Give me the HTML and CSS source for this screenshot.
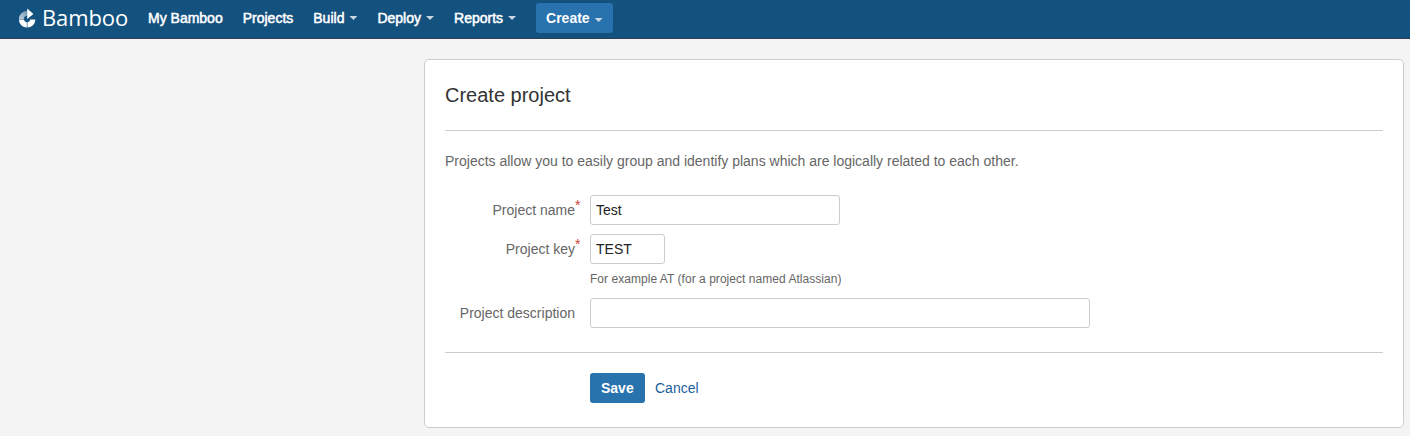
FILE: index.html
```html
<!DOCTYPE html>
<html lang="en">
<head>
<meta charset="utf-8">
<title>Create project - Bamboo</title>
<link rel="stylesheet" href="styles.css">
</head>
<body>
<header class="header">
  <a class="logo">
    <svg class="logo-mark" width="18" height="20" viewBox="0 0 18 20">
      <defs>
        <linearGradient id="fade" x1="0" y1="1" x2="1" y2="0">
          <stop offset="0" stop-color="#fff" stop-opacity=".75"/>
          <stop offset="1" stop-color="#fff" stop-opacity=".4"/>
        </linearGradient>
      </defs>
      <path fill="url(#fade)" d="M.9 11A8.200 8.200 0 0 1 9 3V7.800A3.300 3.300 0 0 0 5.900 11z"/>
      <path fill="#fff" d="M9.200 .6 15.400 5.900 9.200 11z"/>
      <path fill="#fff" d="M.9 11.600H5.900A3.300 3.300 0 0 0 8.800 14.300V19.600A8.300 8.300 0 0 1 .9 11.600zM12.300 11.600H17.400A8.300 8.300 0 0 1 9.400 19.600V14.300A3.300 3.300 0 0 0 12.300 11.600z"/>
    </svg>
    <span class="logo-text">Bamboo</span>
  </a>
  <nav class="nav">
    <a>My Bamboo</a>
    <a>Projects</a>
    <a>Build<i class="caret"></i></a>
    <a>Deploy<i class="caret"></i></a>
    <a>Reports<i class="caret"></i></a>
  </nav>
  <button class="button create">Create<i class="caret"></i></button>
</header>
<main class="panel">
  <h2 class="title">Create project</h2>
  <p class="intro">Projects allow you to easily group and identify plans which are logically related to each other.</p>
  <form class="form">
    <div class="field">
      <label class="label" for="name">Project name<span class="required">*</span></label>
      <input class="input medium" id="name" type="text" value="Test">
    </div>
    <div class="field">
      <label class="label" for="key">Project key<span class="required">*</span></label>
      <input class="input short" id="key" type="text" value="TEST">
    </div>
    <p class="hint">For example AT (for a project named Atlassian)</p>
    <div class="field">
      <label class="label" for="description">Project description</label>
      <input class="input long" id="description" type="text">
    </div>
    <div class="actions">
      <button class="button save" type="button">Save</button>
      <a class="cancel">Cancel</a>
    </div>
  </form>
</main>
</body>
</html>
```

FILE: styles.css
```css
* { box-sizing: border-box; }
body {
  margin: 0;
  background: #f4f4f4;
  color: #666;
  font: 14px/20px "Liberation Sans", Arial, sans-serif;
}
.header {
  display: flex;
  height: 39px;
  padding-left: 18px;
  background: #13517e;
  border-bottom: 1px solid #2e3d54;
  color: #fff;
}
.logo { display: flex; width: 130px; }
.logo-mark { margin-top: 8px; }
.logo-text {
  margin: 2px 0 0 6px;
  font: 400 22px/30px "Open Sans", "Noto Sans", sans-serif;
  letter-spacing: -0.1px;
}
.nav {
  display: flex;
  gap: 20px;
  margin-top: 8px;
  -webkit-text-stroke: 0.5px #fff;
}
.nav a { display: flex; white-space: nowrap; }
.caret {
  width: 8px;
  height: 4px;
  margin: 8px 0 0 5px;
  background: #c9d8e3;
  clip-path: polygon(0 0, 100% 0, 50% 100%);
}
.button {
  display: flex;
  height: 30px;
  padding: 5px 0 0 10px;
  border: 0;
  border-radius: 3px;
  background: #2872ae;
  color: #fff;
  font: bold 14px/20px "Liberation Sans", Arial, sans-serif;
}
.create { width: 77px; margin: 3px 0 0 20px; }
.create .caret { margin-top: 10px; }
.panel {
  width: 980px;
  height: 369px;
  margin: 20px 0 0 424px;
  padding: 20px;
  background: #fff;
  border: 1px solid #ccc;
  border-radius: 5px;
}
.title {
  height: 51px;
  margin: 0;
  border-bottom: 1px solid #ccc;
  color: #333;
  font-size: 20px;
  font-weight: normal;
  line-height: 30px;
}
.intro { margin: 20px 0 24px; }
.field { display: flex; height: 30px; margin-bottom: 9px; }
.label {
  position: relative;
  width: 130px;
  margin-right: 15px;
  padding-top: 5px;
  text-align: right;
}
.required {
  position: absolute;
  top: 0;
  left: 130px;
  color: #d04437;
}
.input {
  height: 30px;
  padding: 0 5px;
  border: 1px solid #ccc;
  border-radius: 3px;
  background: #fff;
  color: #222;
  font: inherit;
}
.medium { width: 250px; }
.short { width: 75px; }
.long { width: 500px; }
.hint { margin: -4px 0 9px 145px; font-size: 12px; letter-spacing: 0.04px; }
.actions {
  display: flex;
  gap: 10px;
  margin-top: 24px;
  padding: 20px 0 0 145px;
  border-top: 1px solid #ccc;
}
.save { width: 55px; padding-left: 11px; }
.cancel { padding-top: 5px; color: #205f9e; }
```
